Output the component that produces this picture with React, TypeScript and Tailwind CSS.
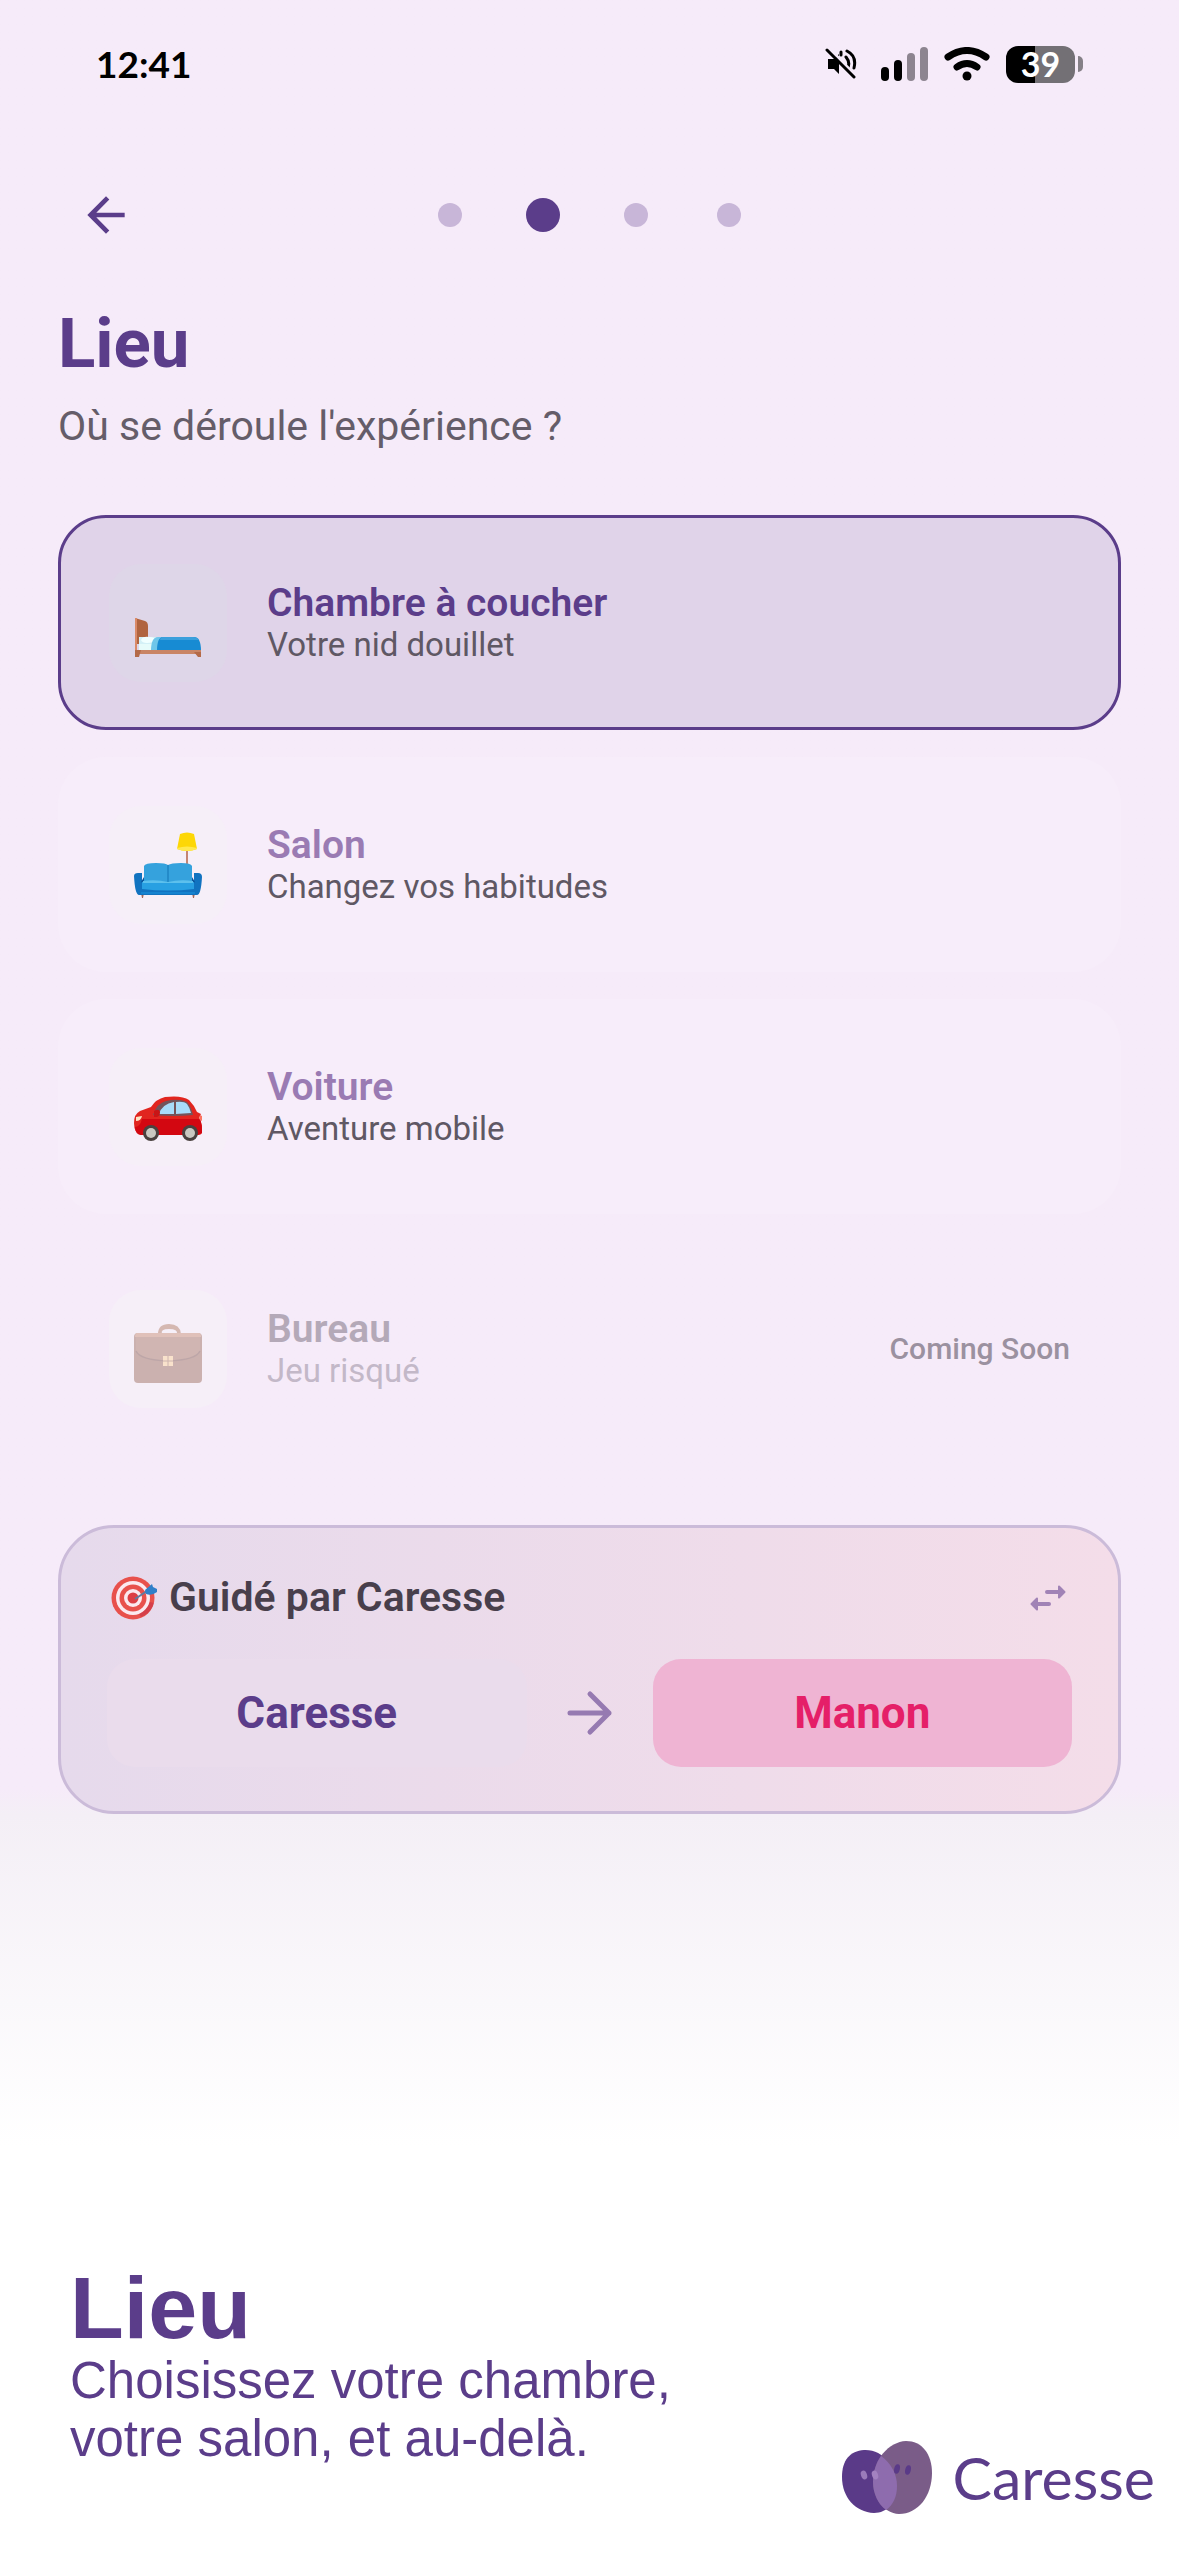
import { useState } from 'react';
import type { ReactNode } from 'react';
import { clsx } from 'clsx';

function BedIcon() {
  return (
    <svg viewBox="0 0 68 68" className="w-[68px] h-[68px]" aria-hidden>
      <path d="M1 29l10 3q3 1 3 5v18H1z" fill="#b0643f" />
      <path d="M1 29h2v38H1z" fill="#d98a68" />
      <path d="M5 48h17v14H5z" fill="#d3f0f6" />
      <path d="M5 55h13l-1 7H5z" fill="#e6fbfa" />
      <path d="M7 51q2-4 8-3 6 0 6 3-2 3-8 3-5 0-6-3z" fill="#f1ffff" />
      <path d="M17 62q0-14 7-14h4l-4 14z" fill="#6ec6ea" />
      <path d="M23 62q0-14 6-14h31q7 0 7 14z" fill="#178bd3" />
      <path d="M28 48h31q5 0 6 3H26q0-2 2-3z" fill="#3ba0dc" />
      <path d="M1 61h66v4H1z" fill="#c98565" />
      <path d="M1 61h6l-2 7H1zM60 63h7v5h-3z" fill="#b46a48" />
    </svg>
  );
}

function CouchIcon() {
  return (
    <svg viewBox="0 0 68 68" className="w-[68px] h-[68px]" aria-hidden>
      <path d="M52 18h2v16h-2z" fill="#c58572" />
      <path d="M46 3q7-3 14 0l3 15q-10 4-20 0z" fill="#fdd706" />
      <path d="M43 17q10-3 20 0v1q-10 4-20 0z" fill="#ffe94f" />
      <path d="M7 62h3l-1 5H8zM58 62h3l-1 5h-1z" fill="#a1695c" />
      <path d="M0 45q0-3 4-3h4v10h52V42h4q4 0 4 4-1 18-5 18H5q-4 0-5-19z" fill="#1173c0" />
      <path d="M10 35q1-3 12-3 10 0 12 2 3-2 13-2 10 0 11 3v19H10z" fill="#35a2dd" />
      <path d="M33 34h2v18h-2z" fill="#238bc9" />
      <path d="M10 46l-3 5 3 2zM58 46l3 5-3 2z" fill="#0a549b" />
      <path d="M8 51q2-1 26 0 23-1 26 0v7q-26 3-52 0z" fill="#28a0e2" />
      <path d="M9 50q13-2 25 1 12-3 25-1v2H9z" fill="#5cc0ed" />
      <path d="M7 61h54v2H7z" fill="#1583cf" />
    </svg>
  );
}

function CarIcon() {
  return (
    <svg viewBox="0 0 68 68" className="w-[68px] h-[68px]" aria-hidden>
      <path d="M0 50q0-9 6-12l11-4q5-8 14-10 17-2 24 3 5 5 8 12l4 2-2 4q4 5 3 15-1 2-4 2H7q-7-2-7-12z" fill="#e1251f" />
      <path d="M8 46h58q2 5 2 14l-4 2H7q-6-1-6-8 5 0 7-8z" fill="#d30711" />
      <path d="M19 42q4-12 13-14 13-3 21 1 4 4 6 13-20 2-40 0z" fill="#74545b" />
      <path d="M25 41q3-10 15-12v12zM42 29q8-1 11 2 3 4 4 9l-15 1z" fill="#a8dcfa" />
      <path d="M20 38q5-3 6 1 0 4-3 5h-3z" fill="#c91516" />
      <path d="M2 44l6-1q-1 5-6 5z" fill="#ffe3c4" />
      <path d="M66 42l2 1v5l-3-2z" fill="#fa7260" />
      <circle cx="17" cy="60" r="8" fill="#49413f" />
      <circle cx="17" cy="60" r="5" fill="#c9c8c1" />
      <circle cx="56" cy="60" r="8" fill="#49413f" />
      <circle cx="56" cy="60" r="5" fill="#c9c8c1" />
    </svg>
  );
}

function BriefcaseIcon() {
  return (
    <svg viewBox="0 0 68 68" className="w-[68px] h-[68px] opacity-40" aria-hidden>
      <path d="M24 19q0-10 11-10t12 10h-4q1-5-8-5t-7 5z" fill="#a5674a" />
      <rect x="0" y="18" width="68" height="50" rx="4" fill="#8d5643" />
      <path d="M3 18h62q2 0 2 4H1q0-4 2-4z" fill="#c07f5e" />
      <path d="M2 22h64v14q-3 8-32 11Q5 44 2 36z" fill="#99604b" />
      <path d="M2 36q4 9 32 10 28-1 32-10" fill="none" stroke="#6a3b33" strokeWidth="1.5" />
      <rect x="29" y="41" width="10" height="10" fill="#ffcf8b" />
      <path d="M29 46h10M34 41v10" stroke="#946045" strokeWidth="1" />
    </svg>
  );
}

function TargetIcon() {
  return (
    <svg viewBox="0 0 46 44" className="w-[46px] h-[44px]" aria-hidden>
      <circle cx="22" cy="22" r="21.5" fill="#e8514c" />
      <circle cx="22" cy="22" r="17" fill="#fbe9ef" />
      <circle cx="22" cy="22" r="13.5" fill="#e8514c" />
      <circle cx="22" cy="22" r="9" fill="#fbe9ef" />
      <circle cx="22" cy="22" r="5.5" fill="#dc3f45" />
      <path d="M30 41q10-4 13-14l-4-1q-3 8-11 12z" fill="#c22e48" opacity=".5" />
      <path d="M24 23l12-8" stroke="#607a9e" strokeWidth="2" />
      <path d="M34 14l7-6 1 3 4 2v3q-5 4-11 2z" fill="#2f80c9" />
    </svg>
  );
}

function StatusIcons() {
  return (
    <div className="flex items-center gap-4">
      <svg viewBox="0 0 32 32" className="w-8 h-8" aria-hidden>
        <path d="M3 11h6l5-5v20l-5-5H3z" />
        <path d="M21 9q5 6 1 12M22 3q10 5 7 17" fill="none" stroke="#000" strokeWidth="3" strokeLinecap="round" />
        <path d="M16 4v3" stroke="#000" strokeWidth="3" strokeLinecap="round" />
        <path d="M4 0l27 28" stroke="#f6ebf9" strokeWidth="3" />
        <path d="M2 2l27 27" stroke="#000" strokeWidth="3" strokeLinecap="round" />
      </svg>
      <div className="flex items-end gap-[5px] ml-2">
        <span className="w-2 h-[14px] rounded-full bg-black" />
        <span className="w-2 h-[21px] rounded-full bg-black" />
        <span className="w-2 h-[28px] rounded-full bg-[#8d8590]" />
        <span className="w-2 h-[34px] rounded-full bg-[#8d8590]" />
      </div>
      <svg viewBox="0 0 46 34" className="w-[46px] h-[34px]" aria-hidden>
        <path d="M4 10q19-13 38 0M13 20q10-7 20 0" fill="none" stroke="#000" strokeWidth="7" strokeLinecap="round" />
        <circle cx="23" cy="29" r="4.5" />
      </svg>
      <div className="flex items-center gap-[3px]">
        <div className="w-[69px] h-[37px] rounded-xl bg-linear-to-r from-black from-42% to-[#737075] to-42% flex items-center justify-center font-[Lato] text-[34px] leading-none font-bold text-white">
          39
        </div>
        <span className="w-[5px] h-4 rounded-r-md bg-[#858087]" />
      </div>
    </div>
  );
}

interface Place {
  id: string;
  name: string;
  description: string;
  icon: ReactNode;
  comingSoon?: boolean;
}

const PLACES: Place[] = [
  { id: 'bedroom', name: 'Chambre à coucher', description: 'Votre nid douillet', icon: <BedIcon /> },
  { id: 'lounge', name: 'Salon', description: 'Changez vos habitudes', icon: <CouchIcon /> },
  { id: 'car', name: 'Voiture', description: 'Aventure mobile', icon: <CarIcon /> },
  { id: 'office', name: 'Bureau', description: 'Jeu risqué', icon: <BriefcaseIcon />, comingSoon: true },
];

function PlaceCard({ place, selected, onSelect }: { place: Place; selected: boolean; onSelect: () => void }) {
  return (
    <button
      onClick={onSelect}
      disabled={place.comingSoon}
      aria-pressed={selected}
      className={clsx(
        'w-full h-[215px] px-12 flex items-center gap-10 rounded-[48px] border-3 text-left',
        selected && 'bg-[#e0d3e9] border-[#5b3d8a]',
        !selected && !place.comingSoon && 'bg-[#f7edfa] border-transparent',
        place.comingSoon && 'border-transparent'
      )}
    >
      <span
        className={clsx(
          'w-[118px] h-[118px] rounded-[32px] flex items-center justify-center shrink-0',
          selected ? 'bg-[#ded6e8]' : 'bg-[#f6eff8]'
        )}
      >
        {place.icon}
      </span>
      <span className="flex-1 min-w-0">
        <span
          className={clsx(
            'block text-[39px] leading-[44px] font-semibold',
            selected && 'text-[#5b3d8a]',
            !selected && !place.comingSoon && 'text-[#9a7bb3]',
            place.comingSoon && 'text-[#b4a9b8]'
          )}
        >
          {place.name}
        </span>
        <span className={clsx('block text-[33px] leading-10', place.comingSoon ? 'text-[#c3b8c8]' : 'text-[#5f5864]')}>
          {place.description}
        </span>
      </span>
      {place.comingSoon && <span className="text-[30px] font-medium text-[#9b91a0] shrink-0">Coming Soon</span>}
    </button>
  );
}

export default function App() {
  const [placeId, setPlaceId] = useState('bedroom');
  const [swapped, setSwapped] = useState(false);
  const step = 1;

  return (
    <div className="min-h-screen flex flex-col bg-linear-to-b from-[#f6ebf9] from-70% via-[#f4eff6] via-71% to-white to-84% font-[Roboto,sans-serif]">
      {/* Status bar */}
      <div className="h-32 px-24 flex items-center justify-between">
        <span className="font-[Lato] text-[37px] font-bold text-black">12:41</span>
        <StatusIcons />
      </div>

      {/* Back + progress */}
      <div className="h-[174px] px-[78px] grid grid-cols-[1fr_auto_1fr] items-center">
        <button aria-label="Retour" className="w-14 h-14">
          <svg viewBox="0 0 24 24" className="w-14 h-14" fill="#5b3d8a" aria-hidden>
            <path d="M20 11H7.83l5.59-5.59L12 4l-8 8 8 8 1.41-1.41L7.83 13H20v-2z" />
          </svg>
        </button>
        <div className="flex items-center">
          {[0, 1, 2, 3].map((i) => (
            <span key={i} className="w-[93px] flex justify-center">
              <span className={clsx('rounded-full', i === step ? 'w-[34px] h-[34px] bg-[#5b3d8a]' : 'w-6 h-6 bg-[#c8b6d8]')} />
            </span>
          ))}
        </div>
      </div>

      <main className="px-[58px]">
        <h1 className="mt-0.5 text-[69px] leading-20 font-bold text-[#5b3d8a]">Lieu</h1>
        <p className="mt-[18px] text-[41px] leading-12 text-[#655d69]">Où se déroule l'expérience ?</p>

        <div className="mt-[65px] flex flex-col gap-[27px]">
          {PLACES.map((place) => (
            <PlaceCard key={place.id} place={place} selected={place.id === placeId} onSelect={() => setPlaceId(place.id)} />
          ))}
        </div>

        {/* Who guides */}
        <section className="mt-[69px] h-[289px] px-[46px] pt-11 rounded-[56px] border-3 border-[#cbbbd9] bg-linear-to-r from-[#e6daec] to-[#f4dde9]">
          <div className="h-[52px] pl-1 flex items-center gap-3">
            <TargetIcon />
            <h2 className="flex-1 text-[41px] font-semibold text-[#483f4c]">Guidé par Caresse</h2>
            <button aria-label="Inverser" onClick={() => setSwapped(!swapped)} className="w-12 h-12">
              <svg viewBox="0 0 48 48" className="w-12 h-12" fill="#a183b6" stroke="#a183b6" aria-hidden>
                <path d="M23 18h13M25 30H12" strokeWidth="4" strokeLinecap="round" />
                <path d="M35 12.500l5.500 5.500-5.500 5.500zM13 24.500L7.500 30l5.500 5.500z" strokeWidth="2" strokeLinejoin="round" />
              </svg>
            </button>
          </div>
          <div className="mt-[35px] flex items-center">
            <button className="flex-1 h-[108px] rounded-[28px] bg-[#eadcec] text-[44px] font-bold text-[#5b3d8a]">
              {swapped ? 'Manon' : 'Caresse'}
            </button>
            <svg viewBox="0 0 48 48" className="w-12 h-12 mx-[39px] shrink-0" fill="none" stroke="#967ab1" strokeWidth="5" aria-hidden>
              <path d="M4 24h39M24 5l19 19-19 19" strokeLinecap="round" strokeLinejoin="round" />
            </svg>
            <button className="flex-1 h-[108px] rounded-[28px] bg-[#efb4d3] text-[44px] font-bold text-[#e51f68]">
              {swapped ? 'Caresse' : 'Manon'}
            </button>
          </div>
        </section>
      </main>

      {/* Caption */}
      <footer className="mt-auto pl-[70px] pr-6 pb-10 flex items-end justify-between text-[#5b3d8a]">
        <div className="pb-12 font-['Liberation_Sans',sans-serif]">
          <h2 className="text-[88px] leading-[88px] font-bold">Lieu</h2>
          <p className="text-[51px] leading-[58px]">
            Choisissez votre chambre,
            <br />
            votre salon, et au-delà.
          </p>
        </div>
        <div className="flex items-center gap-5">
          <svg viewBox="0 0 92 76" className="w-[92px] h-[76px]" aria-hidden>
            <path d="M23 10C42 9 56 27 56 46 56 62 46 73 33 73 14 72 1 57 1 37 1 20 9 11 23 10z" fill="#5a3a88" />
            <path d="M65 1C81 1 91 14 91 33 91 56 77 74 58 74 42 73 32 58 32 42 32 19 48 2 65 1z" fill="#7a5c88" />
            <path d="M40 16C50 23 56 34 56 46 56 57 52 65 45 70 37 64 32 53 32 42 32 32 35 23 40 16z" fill="#8e6cae" />
            <ellipse cx="23" cy="35" rx="3" ry="4.500" fill="#9a7cba" transform="rotate(-20 23 35)" />
            <ellipse cx="34" cy="35" rx="3" ry="4.500" fill="#a382c0" transform="rotate(-20 34 35)" />
            <ellipse cx="56" cy="29" rx="2.800" ry="4.800" fill="#5a3a88" transform="rotate(14 56 29)" />
            <ellipse cx="67" cy="30" rx="2.800" ry="4.800" fill="#5a3a88" transform="rotate(14 67 30)" />
          </svg>
          <span className="font-[Lato] text-[59px] leading-[76px]">Caresse</span>
        </div>
      </footer>
    </div>
  );
}
